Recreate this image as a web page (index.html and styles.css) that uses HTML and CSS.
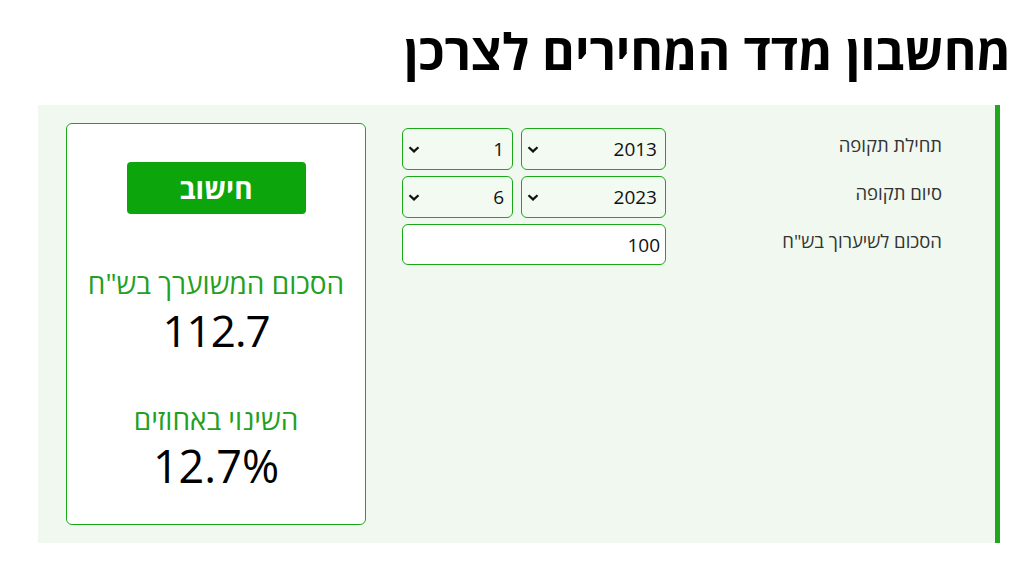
FILE: index.html
```html
<!DOCTYPE html>
<html lang="he" dir="rtl">
<head>
<meta charset="utf-8">
<title>מחשבון מדד המחירים לצרכן</title>
<link rel="stylesheet" href="styles.css">
</head>
<body>
<h1 class="title">מחשבון מדד המחירים לצרכן</h1>
<section class="panel">
  <div class="form">
    <div class="label">תחילת תקופה</div>
    <div class="controls">
      <span class="sel-wrap sel-year">
        <select class="sel"><option>2013</option></select>
        <svg class="chev" width="12" height="7" viewBox="0 0 12 7"><path d="M1.5 1.2 L6 5.4 L10.5 1.2" fill="none" stroke="#111" stroke-width="2.2"/></svg>
      </span>
      <span class="sel-wrap sel-month">
        <select class="sel"><option>1</option></select>
        <svg class="chev" width="12" height="7" viewBox="0 0 12 7"><path d="M1.5 1.2 L6 5.4 L10.5 1.2" fill="none" stroke="#111" stroke-width="2.2"/></svg>
      </span>
    </div>
    <div class="label">סיום תקופה</div>
    <div class="controls">
      <span class="sel-wrap sel-year">
        <select class="sel"><option>2023</option></select>
        <svg class="chev" width="12" height="7" viewBox="0 0 12 7"><path d="M1.5 1.2 L6 5.4 L10.5 1.2" fill="none" stroke="#111" stroke-width="2.2"/></svg>
      </span>
      <span class="sel-wrap sel-month">
        <select class="sel"><option>6</option></select>
        <svg class="chev" width="12" height="7" viewBox="0 0 12 7"><path d="M1.5 1.2 L6 5.4 L10.5 1.2" fill="none" stroke="#111" stroke-width="2.2"/></svg>
      </span>
    </div>
    <div class="label">הסכום לשיערוך בש"ח</div>
    <div class="controls">
      <input class="amount" type="text" value="100">
    </div>
  </div>
  <div class="card">
    <button class="calc">חישוב</button>
    <div class="res-label first">הסכום המשוערך בש"ח</div>
    <div class="res-value">112.7</div>
    <div class="res-label second">השינוי באחוזים</div>
    <div class="res-value pct">12.7%</div>
  </div>
</section>
</body>
</html>
```
FILE: styles.css
```css
html, body {
  margin: 0;
  padding: 0;
  background: #fff;
  font-family: "Open Sans", "Noto Sans", "DejaVu Sans", sans-serif;
  color: #000;
}
.title {
  margin: 0;
  padding: 20px 7px 0 0;
  height: 105px;
  box-sizing: border-box;
  font-size: 50px;
  font-weight: 700;
  line-height: 62px;
  color: #000;
}
.panel {
  margin: 0 18px 0 38px;
  height: 438px;
  box-sizing: border-box;
  background: #f0f8f0;
  border-right: 5px solid #1fa71f;
  padding: 18px 53px 18px 28px;
  display: flex;
  justify-content: space-between;
  align-items: stretch;
}
.form {
  display: grid;
  grid-template-columns: 276px 264px;
  grid-auto-rows: 42px;
  row-gap: 6px;
  align-content: start;
  padding-top: 5px;
}
.label {
  font-size: 18.5px;
  line-height: 24px;
  padding-top: 5px;
  color: #333;
}
.controls {
  display: flex;
  gap: 8px;
}
.sel-wrap {
  position: relative;
  display: block;
  height: 42px;
}
.sel-year { width: 145px; }
.sel-month { width: 111px; }
.sel {
  width: 100%;
  height: 42px;
  box-sizing: border-box;
  border: 1px solid #18a818;
  border-radius: 6px;
  background: #f2faf2;
  font-family: inherit;
  font-size: 19px;
  color: #111;
  padding: 0 8px 0 24px;
  direction: rtl;
  appearance: none;
  -webkit-appearance: none;
  text-align: right;
}
.chev {
  position: absolute;
  left: 6px;
  top: 18px;
  pointer-events: none;
}
.amount {
  width: 264px;
  height: 41px;
  box-sizing: border-box;
  border: 1px solid #18a818;
  border-radius: 6px;
  background: #fff;
  font-family: inherit;
  font-size: 19px;
  color: #111;
  padding: 0 5px;
  text-align: right;
}
.card {
  width: 300px;
  box-sizing: border-box;
  background: #fff;
  border: 1px solid #18a818;
  border-radius: 6px;
  display: flex;
  flex-direction: column;
  align-items: center;
  padding-top: 38px;
}
.calc {
  width: 179px;
  height: 52px;
  border: 0;
  border-radius: 4px;
  background: #0ca60c;
  color: #fff;
  font-family: inherit;
  font-size: 28px;
  font-weight: 700;
  line-height: 52px;
  padding: 0;
}
.res-label {
  font-size: 28px;
  line-height: 36px;
  color: #22a022;
}
.res-label.first { margin-top: 51px; }
.res-label.second { margin-top: 45px; }
.res-value {
  font-size: 44px;
  line-height: 52px;
  margin-top: 3px;
  letter-spacing: -1px;
  color: #000;
}
.res-value.pct {
  letter-spacing: 0;
  font-size: 45px;
}
```
